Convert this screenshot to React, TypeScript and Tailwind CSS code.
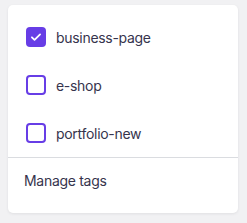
import React, { useState } from 'react';

const tags = ['business-page', 'e-shop', 'portfolio-new'];

const Checkbox: React.FC<{ checked: boolean }> = ({ checked }) =>
    checked ? (
        <span className="flex h-5 w-5 items-center justify-center rounded-[4px] bg-[#673de6]">
            <svg width="14" height="14" viewBox="0 0 24 24" fill="none" stroke="white" strokeWidth="3" strokeLinecap="round" strokeLinejoin="round">
                <path d="M5 12.5l4.5 4.5L19 7.5" />
            </svg>
        </span>
    ) : (
        <span className="h-5 w-5 rounded-[4px] border-2 border-[#673de6]" />
    );

export default function App() {
    const [selected, setSelected] = useState<string[]>(['business-page']);

    const toggle = (tag: string) =>
        setSelected((s) => (s.includes(tag) ? s.filter((t) => t !== tag) : [...s, tag]));

    return (
        <div className="h-[223px] w-[247px] bg-[#f1f1f3] pl-2 pt-[5px] font-['Inter',sans-serif]">
            <div className="w-[230px] rounded-[5px] bg-white shadow-[0_1px_3px_rgba(29,30,32,0.08)]">
                <div className="pt-2">
                    {tags.map((tag) => (
                        <button
                            key={tag}
                            onClick={() => toggle(tag)}
                            className="flex h-12 w-full items-center gap-[10px] pl-[18px] text-left text-[14px] tracking-[-0.3px] text-[#36344d]"
                        >
                            <Checkbox checked={selected.includes(tag)} />
                            <span>{tag}</span>
                        </button>
                    ))}
                </div>
                <div className="border-t border-[#dadce0] pb-[11px]">
                    <button className="flex h-11 w-full items-center pl-4 text-left text-[14px] tracking-[-0.3px] text-[#36344d]">
                        Manage tags
                    </button>
                </div>
            </div>
        </div>
    );
}
